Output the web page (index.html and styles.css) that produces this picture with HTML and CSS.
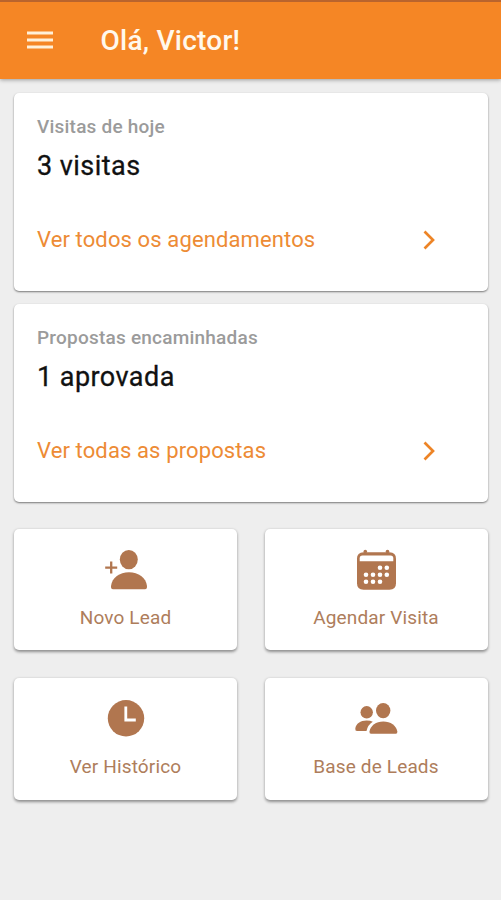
FILE: index.html
```html
<!DOCTYPE html>
<html lang="pt-BR">
<head>
    <meta charset="UTF-8">
    <meta name="viewport" content="width=device-width, initial-scale=1.0">
    <title>Olá, Victor!</title>
    <link rel="stylesheet" href="styles.css">
</head>
<body>
    <header class="topbar">
        <svg class="menu-icon" viewBox="0 0 26 18">
            <path d="M0 2h26M0 9h26M0 16h26" />
        </svg>
        <h1>Olá, Victor!</h1>
    </header>

    <main class="container">
        <section class="card">
            <p class="card-label">Visitas de hoje</p>
            <p class="card-value">3 visitas</p>
            <a class="card-link">
                <span>Ver todos os agendamentos</span>
                <svg class="arrow" viewBox="0 0 12 20"><path d="M1.5 1.5L10 10l-8.5 8.5" /></svg>
            </a>
        </section>

        <section class="card">
            <p class="card-label">Propostas encaminhadas</p>
            <p class="card-value">1 aprovada</p>
            <a class="card-link">
                <span>Ver todas as propostas</span>
                <svg class="arrow" viewBox="0 0 12 20"><path d="M1.5 1.5L10 10l-8.5 8.5" /></svg>
            </a>
        </section>

        <nav class="actions">
            <a class="tile">
                <svg class="tile-icon" viewBox="0 0 48 48">
                    <ellipse cx="26.8" cy="13.6" rx="9" ry="9.7" />
                    <path d="M9 40C10 31.5 17.5 26.2 27 26.2S44 31.5 45 40Q45.200 43.2 43 43.2H11Q8.800 43.2 9 40Z" />
                    <path class="line" d="M3.200 21.600h12M9.200 15.600v12" />
                </svg>
                <span>Novo Lead</span>
            </a>
            <a class="tile">
                <svg class="tile-icon" viewBox="0 0 48 48">
                    <path d="M11.5 6.2h26q6.5 0 6.5 6.5v24.5q0 6.5-6.5 6.5h-26Q5 43.7 5 37.2V12.700q0-6.5 6.5-6.5z" />
                    <circle cx="13.3" cy="5.5" r="1.8" />
                    <circle cx="35.5" cy="5.5" r="1.8" />
                    <path class="cut" d="M10.5 9.5h28q2.8 0 2.8 2.8v3H7.700v-3q0-2.8 2.8-2.8z" />
                    <g class="cut">
                        <circle cx="28" cy="21.8" r="2.3" />
                        <circle cx="34.8" cy="21.8" r="2.3" />
                        <circle cx="14" cy="28.7" r="2.3" />
                        <circle cx="21" cy="28.7" r="2.3" />
                        <circle cx="28" cy="28.7" r="2.3" />
                        <circle cx="34.8" cy="28.7" r="2.3" />
                        <circle cx="14" cy="35.7" r="2.3" />
                        <circle cx="21" cy="35.7" r="2.3" />
                        <circle cx="28" cy="35.7" r="2.3" />
                    </g>
                </svg>
                <span>Agendar Visita</span>
            </a>
            <a class="tile">
                <svg class="tile-icon" viewBox="0 0 48 48">
                    <circle cx="24" cy="23.3" r="18.2" />
                    <path class="hands" d="M23.800 11.500v13.500h10" />
                </svg>
                <span>Ver Histórico</span>
            </a>
            <a class="tile">
                <svg class="tile-icon" viewBox="0 0 48 48">
                    <circle cx="14.7" cy="17.3" r="6.2" />
                    <ellipse cx="31.2" cy="15.6" rx="7.2" ry="7.7" />
                    <path d="M3.3 33.5C4 28.5 8.5 25.500 14.5 25.500q4 0 6.3 1.2-5 3-6.3 9.3H5q-2 0-1.7-2.5z" />
                    <path d="M17.5 36.5C18.5 30.5 24 26.500 31.3 26.500s13 4 14 10q.3 2.2-1.5 2.2H19q-1.8 0-1.5-2.2z" />
                </svg>
                <span>Base de Leads</span>
            </a>
        </nav>
    </main>
</body>
</html>
```

FILE: styles.css
```css
body {
    font-family: Roboto, sans-serif;
    margin: 0;
    min-height: 100vh;
    background-color: #eeeeee;
}
.topbar {
    box-sizing: border-box;
    height: 79px;
    padding: 0 0 1px 26.5px;
    display: flex;
    align-items: center;
    background-color: #f58625;
    border-top: 2px solid #b9642d;
    box-shadow: 0 1px 4px rgba(0, 0, 0, 0.35);
}
.topbar h1 {
    margin: 0 0 0 48px;
    color: #fff8ec;
    font-size: 28px;
    font-weight: 500;
    letter-spacing: 0.25px;
}
.menu-icon {
    width: 26px;
    height: 18px;
    fill: none;
    stroke: #fff0d8;
    stroke-width: 2.8;
}
.container {
    padding: 14px 13.5px 40px 14px;
}
.card {
    box-sizing: border-box;
    height: 197.5px;
    margin-bottom: 13.5px;
    padding: 22px 53px 0 23px;
    background-color: #fff;
    border-radius: 5px;
    box-shadow: 0 1px 2px rgba(0, 0, 0, 0.5);
}
.card p {
    margin: 0;
}
.card .card-label {
    color: #9b9b9b;
    font-size: 19px;
    font-weight: 500;
    line-height: 24px;
    letter-spacing: 0.22px;
}
.card .card-value {
    margin-top: 9px;
    color: #111;
    font-size: 27px;
    line-height: 36px;
    letter-spacing: 0.45px;
    -webkit-text-stroke: 0.3px #111;
}
.card-link {
    display: flex;
    justify-content: space-between;
    align-items: center;
    margin-top: 41px;
    color: #ed8b35;
    font-size: 22px;
    line-height: 30px;
    letter-spacing: 0.12px;
}
.arrow {
    width: 12px;
    height: 20px;
    fill: none;
    stroke: #ed8426;
    stroke-width: 2.7;
}
.actions {
    display: grid;
    grid-template-columns: 1fr 1fr;
    gap: 28px 27.5px;
    margin-top: 27px;
}
.tile {
    box-sizing: border-box;
    height: 121.5px;
    padding-top: 17px;
    display: flex;
    flex-direction: column;
    align-items: center;
    background-color: #fff;
    border-radius: 5px;
    box-shadow: 0 1.5px 3px rgba(0, 0, 0, 0.4);
    color: #ae7d5b;
    font-size: 19px;
    line-height: 24px;
    letter-spacing: 0.15px;
}
.tile-icon {
    width: 48px;
    height: 48px;
    margin-bottom: 12px;
    fill: #b1764f;
}
.tile-icon .cut {
    fill: #fff;
}
.tile-icon .line {
    stroke: #b1764f;
    stroke-width: 2.3;
}
.tile-icon .hands {
    fill: none;
    stroke: #fff;
    stroke-width: 2.8;
}
```
